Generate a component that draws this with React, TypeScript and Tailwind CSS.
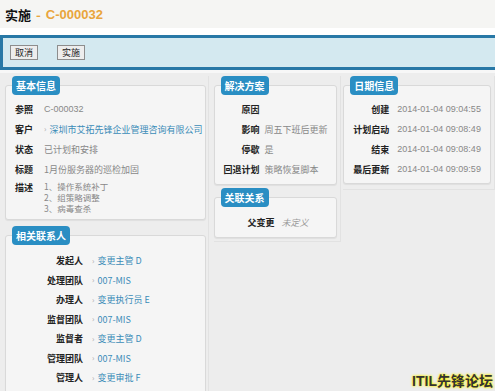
import React from "react";

type Row = {
  label: string;
  value: string;
  link?: boolean;
  italic?: boolean;
  mono?: boolean;
};

const cjk = "font-['Noto_Sans_CJK_SC','Noto_Sans',sans-serif]";
const latin = "font-['Liberation_Sans','Noto_Sans_CJK_SC',sans-serif]";

function Panel({
  title,
  children,
  className = "",
}: {
  title: string;
  children: React.ReactNode;
  className?: string;
}) {
  return (
    <div className={`flex flex-col ${className}`}>
      <div className="relative z-10 ml-[7px] self-start h-[19px] rounded-[4px] bg-[#2a8ec3] px-[4px] flex items-center text-[10px] font-bold text-white leading-none">
        {title}
      </div>
      <div className="-mt-[10px] rounded-[3px] border border-[#d9d9d9] bg-[#f5f5f5] shadow-[0_1px_1px_rgba(0,0,0,0.06)]">
        {children}
      </div>
    </div>
  );
}

function Value({ row }: { row: Row }) {
  if (row.link) {
    return (
      <span className="flex items-center whitespace-nowrap text-[#3b8cb8]">
        <span className="mr-[3px] text-[8px] text-[#aaa]">›</span>
        {row.value}
      </span>
    );
  }
  return (
    <span
      className={`whitespace-nowrap ${row.mono ? latin : ""} ${
        row.italic ? "italic text-[#999]" : "text-[#888]"
      }`}
    >
      {row.value}
    </span>
  );
}

function RightRows({
  rows,
  labelW,
  gap,
  rowH = "h-[20px]",
}: {
  rows: Row[];
  labelW: string;
  gap: string;
  rowH?: string;
}) {
  return (
    <div className="flex flex-col">
      {rows.map((r, idx) => (
        <div key={idx} className={`flex items-center ${rowH}`}>
          <span className={`${labelW} shrink-0 text-right font-bold text-[#222] whitespace-nowrap`}>
            {r.label}
          </span>
          <span className={gap} />
          <Value row={r} />
        </div>
      ))}
    </div>
  );
}

export default function App() {
  const basic: Row[] = [
    { label: "参照", value: "C-000032", mono: true },
    { label: "客户", value: "深圳市艾拓先锋企业管理咨询有限公司", link: true },
    { label: "状态", value: "已计划和安排" },
    { label: "标题", value: "1月份服务器的巡检加固" },
  ];
  const solution: Row[] = [
    { label: "原因", value: "" },
    { label: "影响", value: "周五下班后更新" },
    { label: "停歇", value: "是" },
    { label: "回退计划", value: "策略恢复脚本" },
  ];
  const dates: Row[] = [
    { label: "创建", value: "2014-01-04 09:04:55", mono: true },
    { label: "计划启动", value: "2014-01-04 09:08:49", mono: true },
    { label: "结束", value: "2014-01-04 09:08:49", mono: true },
    { label: "最后更新", value: "2014-01-04 09:09:59", mono: true },
  ];
  const contacts: Row[] = [
    { label: "发起人", value: "变更主管 D", link: true },
    { label: "处理团队", value: "007-MIS", link: true },
    { label: "办理人", value: "变更执行员 E", link: true },
    { label: "监督团队", value: "007-MIS", link: true },
    { label: "监督者", value: "变更主管 D", link: true },
    { label: "管理团队", value: "007-MIS", link: true },
    { label: "管理人", value: "变更审批 F", link: true },
  ];

  return (
    <div className={`relative w-[495px] h-[391px] overflow-hidden bg-[#ededed] text-[9px] leading-none ${cjk}`}>
      {/* header */}
      <div className="h-[28px] bg-[#f5f5f3] pl-[5px] flex items-center text-[13px] font-bold">
        <span className="text-[#111]">实施</span>
        <span className="ml-[5px] text-[#e9a53c]">-</span>
        <span className={`ml-[5px] text-[#e9a53c] ${latin}`}>C-000032</span>
      </div>
      <div className="h-[7px] bg-white" />

      {/* toolbar */}
      <div className="h-[35px] border-y-[3px] border-l-[3px] border-[#2878a6] bg-[#d4e9f0] flex items-center pl-[7px] gap-[19px]">
        <button className="h-[15px] w-[28px] border border-[#8d8d8d] bg-[#ededed] text-[9px] text-[#222] leading-none">
          取消
        </button>
        <button className="h-[15px] w-[28px] border border-[#8d8d8d] bg-[#ededed] text-[9px] text-[#222] leading-none">
          实施
        </button>
      </div>
      <div className="h-[3px] bg-[#f7f7f7]" />

      {/* body */}
      <div className="flex items-start pt-[3px] pl-[3px]">
        {/* col 1 */}
        <div className="w-[206px] flex flex-col gap-[6px] px-[2px] border-r border-[#e2e2e2]">
          <Panel title="基本信息">
            <div className="pt-[13px] pb-[5px] pl-[9px]">
              {basic.map((r, idx) => (
                <div key={idx} className="flex items-center h-[20px]">
                  <span className="w-[29px] shrink-0 font-bold text-[#222]">{r.label}</span>
                  <Value row={r} />
                </div>
              ))}
              <div className="flex items-start pt-[2px]">
                <span className="w-[29px] shrink-0 pt-[1px] font-bold text-[#222] leading-[11px]">描述</span>
                <div className="flex flex-col text-[8.5px] text-[#888] leading-[11px]">
                  <span className="h-[11px]">1、操作系统补丁</span>
                  <span className="h-[11px]">2、组策略调整</span>
                  <span className="h-[11px]">3、病毒查杀</span>
                </div>
              </div>
            </div>
          </Panel>
          <Panel title="相关联系人">
            <div className="pt-[15px] pb-[20px]">
              <RightRows rows={contacts} labelW="w-[77px]" gap="w-[9px]" rowH="h-[19.5px]" />
            </div>
          </Panel>
        </div>

        {/* col 2 */}
        <div className="ml-[5px] w-[128px] flex flex-col gap-[3px] pr-[3px] pb-[3px] border-r border-b border-[#e2e2e2]">
          <Panel title="解决方案">
            <div className="pt-[13px] pb-[5px]">
              <RightRows rows={solution} labelW="w-[45px]" gap="w-[5px]" />
            </div>
          </Panel>
          <Panel title="关联关系">
            <div className="pt-[14px] pb-[5px]">
              <RightRows rows={[{ label: "父变更", value: "未定义", italic: true }]} labelW="w-[60px]" gap="w-[7px]" />
            </div>
          </Panel>
        </div>

        {/* col 3 */}
        <div className="ml-[2px] w-[152px] flex flex-col pr-[3px] pb-[5px] border-b border-r border-[#e2e2e2]">
          <Panel title="日期信息">
            <div className="pt-[13px] pb-[4px]">
              <RightRows rows={dates} labelW="w-[45px]" gap="w-[8px]" />
            </div>
          </Panel>
        </div>
      </div>

      {/* watermark */}
      <div className="absolute right-[2px] bottom-[3px] text-[14px] font-bold text-[#333] [text-shadow:0_0_2px_#fff200,0_0_3px_#fff200]">
        <span className={latin}>ITIL</span>先锋论坛
      </div>
    </div>
  );
}
